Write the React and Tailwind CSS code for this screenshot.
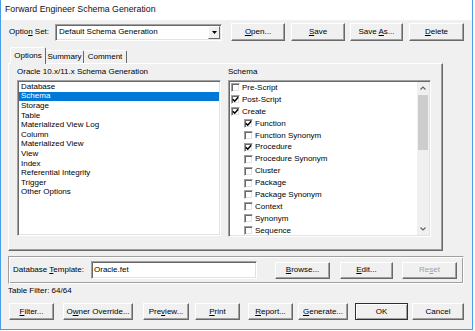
import React from "react";

const sunken =
  "border border-t-[#a0a0a0] border-l-[#a0a0a0] border-r-white border-b-white shadow-[inset_1px_1px_0_#696969,inset_-1px_-1px_0_#e3e3e3]";

const leftItems = [
  "Database",
  "Schema",
  "Storage",
  "Table",
  "Materialized View Log",
  "Column",
  "Materialized View",
  "View",
  "Index",
  "Referential Integrity",
  "Trigger",
  "Other Options",
];

const schemaItems = [
  ["Pre-Script", 0, false],
  ["Post-Script", 0, true],
  ["Create", 0, true],
  ["Function", 1, true],
  ["Function Synonym", 1, false],
  ["Procedure", 1, true],
  ["Procedure Synonym", 1, false],
  ["Cluster", 1, false],
  ["Package", 1, false],
  ["Package Synonym", 1, false],
  ["Context", 1, false],
  ["Synonym", 1, false],
  ["Sequence", 1, false],
];

function Btn({ children, className = "", def, disabled }) {
  const edge = def
    ? "border border-[#2f2f2f] shadow-[inset_1px_1px_0_#ffffff,inset_-1px_-1px_0_#a0a0a0]"
    : "border border-t-white border-l-white border-r-[#696969] border-b-[#696969] shadow-[inset_-1px_-1px_0_#a0a0a0]";
  return (
    <div
      className={`flex items-center justify-center bg-[#f0f0f0] shrink-0 ${edge} ${
        disabled ? "text-[#a0a0a0]" : "text-black"
      } ${className}`}
    >
      <span className="leading-none">{children}</span>
    </div>
  );
}

function CheckBox({ checked }) {
  return (
    <span
      className={`w-[9px] h-[9px] bg-white shrink-0 flex items-center justify-center ${sunken}`}
    >
      {checked && (
        <svg width="7" height="7" viewBox="0 0 7 7">
          <path d="M0.8 3.2 L2.7 5.2 L6.2 1.2" fill="none" stroke="#000" strokeWidth="1.5" />
        </svg>
      )}
    </span>
  );
}

function Chevron({ up }) {
  return (
    <svg width="6" height="4" viewBox="0 0 6 4">
      <path
        d={up ? "M0.5 3.5 L3 1 L5.5 3.5" : "M0.5 0.5 L3 3 L5.5 0.5"}
        fill="none"
        stroke="#606060"
        strokeWidth="1.1"
      />
    </svg>
  );
}

export default function App() {
  return (
    <div className="w-[475px] h-[331px] bg-white font-['Liberation_Sans',Arial,sans-serif] text-[8px] text-black">
      <div className="w-[473px] h-[330px] bg-[#f0f0f0] border-l border-r border-b border-[#4a9ce6] flex flex-col">
        {/* title bar */}
        <div className="h-[20px] bg-white flex items-center pl-[4px] text-[8.8px] text-[#111]">
          Forward Engineer Schema Generation
        </div>

        {/* option set row */}
        <div className="flex items-center h-[18px] mt-[3px]">
          <div className="pl-[8px] w-[54px]">
            Optio<u>n</u> Set:
          </div>
          <div className={`w-[167px] h-[17px] bg-white flex items-center ${sunken}`}>
            <span className="flex-1 pl-[3px]">Default Schema Generation</span>
            <div className="w-[12px] h-[13px] mr-[1px] bg-[#f0f0f0] flex items-center justify-center border border-t-white border-l-white border-r-[#696969] border-b-[#696969]">
              <svg width="5" height="3" viewBox="0 0 5 3">
                <path d="M0 0 H5 L2.5 3 Z" fill="#000" />
              </svg>
            </div>
          </div>
          <Btn className="ml-[9px] w-[54px] h-[18px]">
            <u>O</u>pen...
          </Btn>
          <Btn className="ml-[6px] w-[54px] h-[18px]">
            <u>S</u>ave
          </Btn>
          <Btn className="ml-[5px] w-[53px] h-[18px]">
            Save <u>A</u>s...
          </Btn>
          <Btn className="ml-[6px] w-[55px] h-[18px]">
            <u>D</u>elete
          </Btn>
        </div>

        {/* tabs */}
        <div className="flex items-end h-[16px] mt-[6px] pl-[9px]">
          <div className="relative z-10 -mb-[1px] w-[36px] h-[17px] bg-[#f0f0f0] flex items-center justify-center pb-[1px] border-t border-l border-r border-t-white border-l-white border-r-[#696969] rounded-t-[2px]">
            Options
          </div>
          <div className="w-[38px] h-[13px] flex items-center justify-center border-t border-r border-t-white border-r-[#696969] rounded-t-[2px]">
            Summary
          </div>
          <div className="w-[43px] h-[13px] flex items-center justify-center border-t border-r border-t-white border-r-[#696969] rounded-t-[2px]">
            Comment
          </div>
        </div>

        {/* tab panel */}
        <div className="ml-[7px] w-[435px] h-[188px] border border-t-white border-l-white border-r-[#696969] border-b-[#696969] shadow-[inset_-1px_-1px_0_#a0a0a0] flex">
          {/* left column */}
          <div className="flex flex-col pl-[8px]">
            <div className="h-[16px] flex items-center">Oracle 10.x/11.x Schema Generation</div>
            <div className={`w-[204px] h-[156px] bg-white p-[1px] ${sunken}`}>
              {leftItems.map((item) => (
                <div
                  key={item}
                  className={`h-[9.6px] flex items-center pl-[2px] ${
                    item === "Schema" ? "bg-[#0078d7] text-white" : ""
                  }`}
                >
                  {item}
                </div>
              ))}
            </div>
          </div>

          {/* right column */}
          <div className="flex flex-col ml-[7px]">
            <div className="h-[16px] flex items-center">Schema</div>
            <div className={`w-[203px] h-[157px] bg-white p-[1px] flex ${sunken}`}>
              <div className="flex-1">
                {schemaItems.map(([label, level, checked]) => (
                  <div
                    key={label}
                    className={`h-[11.9px] flex items-center ${level ? "pl-[14px]" : "pl-[1px]"}`}
                  >
                    <CheckBox checked={checked} />
                    <span className="ml-[2px]">{label}</span>
                  </div>
                ))}
              </div>
              <div className="w-[12px] bg-[#f0f0f0] flex flex-col">
                <div className="h-[12px] flex items-center justify-center">
                  <Chevron up />
                </div>
                <div className="h-[55px] mt-[1px] mx-[1px] bg-[#cdcdcd]" />
                <div className="flex-1" />
                <div className="h-[12px] flex items-center justify-center">
                  <Chevron />
                </div>
              </div>
            </div>
          </div>
        </div>

        {/* database template */}
        <div className="ml-[7px] mt-[5px] w-[456px] h-[28px] flex items-center border border-t-[#a0a0a0] border-l-[#a0a0a0] border-r-white border-b-white shadow-[inset_1px_1px_0_#ffffff,inset_-1px_-1px_0_#a0a0a0]">
          <div className="pl-[4px] w-[82px]">
            Database <u>T</u>emplate:
          </div>
          <div className={`w-[166px] h-[18px] bg-white flex items-center pl-[2px] ${sunken}`}>
            Oracle.fet
          </div>
          <Btn className="ml-[18px] w-[55px] h-[17px]">
            <u>B</u>rowse...
          </Btn>
          <Btn className="ml-[10px] w-[53px] h-[17px]">
            <u>E</u>dit...
          </Btn>
          <Btn className="ml-[9px] w-[55px] h-[17px]" disabled>
            Re<u>s</u>et
          </Btn>
        </div>

        {/* table filter */}
        <div className="h-[13px] pl-[7px] flex items-center">Table Filter: 64/64</div>

        {/* bottom buttons */}
        <div className="flex items-center mt-[6px]">
          <Btn className="ml-[8px] w-[45px] h-[17px]">
            <u>F</u>ilter...
          </Btn>
          <Btn className="ml-[9px] w-[70px] h-[17px]">
            O<u>w</u>ner Override...
          </Btn>
          <Btn className="ml-[10px] w-[46px] h-[17px]">
            Pre<u>v</u>iew...
          </Btn>
          <Btn className="ml-[6px] w-[45px] h-[17px]">
            <u>P</u>rint
          </Btn>
          <Btn className="ml-[8px] w-[45px] h-[17px]">
            <u>R</u>eport...
          </Btn>
          <Btn className="ml-[5px] w-[50px] h-[17px]">
            <u>G</u>enerate...
          </Btn>
          <Btn className="ml-[7px] w-[53px] h-[17px]" def>
            OK
          </Btn>
          <Btn className="ml-[4px] w-[52px] h-[17px]">
            Cancel
          </Btn>
        </div>
      </div>
    </div>
  );
}
